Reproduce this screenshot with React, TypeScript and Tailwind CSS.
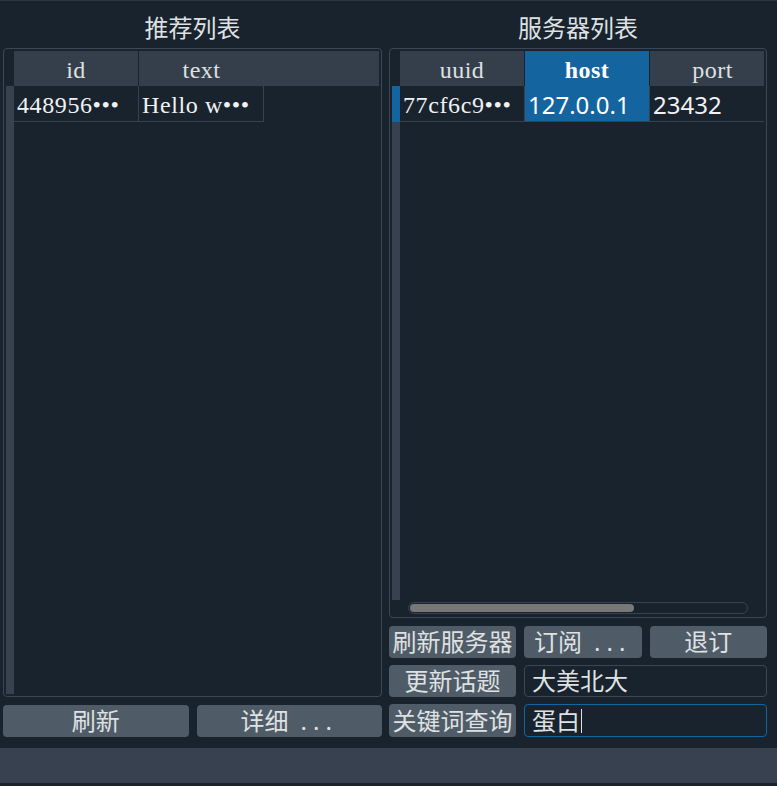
const serif = "font-['Liberation_Serif','Noto_Sans_CJK_SC',serif]";
const sans = "font-['Noto_Sans','Noto_Sans_CJK_SC',sans-serif]";

function Btn({ label, dots }: { label: string; dots?: boolean }) {
  return (
    <button className={`h-full rounded-[4px] bg-[#4f5c67] text-[#dfe1e2] text-[24px] leading-none ${sans}`}>
      {label}
      {dots && <span className="ml-[12px] tracking-[6px]">...</span>}
    </button>
  );
}

function HeaderCell({ label, active, last }: { label: string; active?: boolean; last?: boolean }) {
  return (
    <div
      className={`w-[125px] shrink-0 h-full flex items-center justify-center pt-[2px] text-[24px] leading-none tracking-[0.5px] ${serif} ${
        last ? "" : "border-r border-[#19232d]"
      } ${active ? "bg-[#1464a0] text-white font-bold" : "text-[#dfe1e2]"}`}
    >
      {label}
    </div>
  );
}

function Cell({ value, active, font }: { value: string; active?: boolean; font: string }) {
  return (
    <div
      className={`w-[125px] shrink-0 h-full border-r border-[#37414f] flex items-center pl-[3px] pt-[3px] text-[24px] leading-none whitespace-nowrap overflow-hidden ${font} ${
        active ? "bg-[#1464a0] text-white" : "text-[#f0f1f2]"
      }`}
    >
      {value}
    </div>
  );
}

function LeftTable() {
  return (
    <div className="flex-1 min-h-0 border border-[#3b4754] rounded-[4px] p-[2px] flex">
      <div className="w-[8px] flex flex-col">
        <div className="h-[35px]" />
        <div className="flex-1 bg-[#37414f]" />
      </div>
      <div className="flex-1 flex flex-col overflow-hidden">
        <div className="h-[35px] bg-[#343f4b] flex">
          <HeaderCell label="id" />
          <HeaderCell label="text" last />
        </div>
        <div className="h-[36px] flex">
          <div className="flex border-b border-[#37414f] tracking-[0.6px]">
            <Cell value="448956•••" font={serif} />
            <Cell value="Hello w•••" font={serif} />
          </div>
        </div>
      </div>
    </div>
  );
}

function RightTable() {
  return (
    <div className="flex-1 min-h-0 border border-[#3b4754] rounded-[4px] p-[2px] flex flex-col">
      <div className="flex-1 flex min-h-0">
        <div className="w-[8px] flex flex-col">
          <div className="h-[35px]" />
          <div className="h-[36px] bg-[#1464a0]" />
          <div className="flex-1 bg-[#37414f]" />
        </div>
        <div className="flex-1 flex flex-col overflow-hidden">
          <div className="h-[35px] bg-[#343f4b] flex">
            <HeaderCell label="uuid" />
            <HeaderCell label="host" active />
            <HeaderCell label="port" last />
          </div>
          <div className="h-[36px] flex border-b border-[#37414f]">
            <div className="flex tracking-[0.6px]">
              <Cell value="77cf6c9•••" font={serif} />
            </div>
            <Cell value="127.0.0.1" font={sans} active />
            <Cell value="23432" font={sans} />
          </div>
        </div>
      </div>
      <div className="h-[15px] pt-[2px] pl-[16px] pr-[16px]">
        <div className="h-[12px] border border-[#37414f] rounded-full p-[1px]">
          <div className="h-full w-[224px] bg-[#787878] rounded-full" />
        </div>
      </div>
    </div>
  );
}

function Title({ text }: { text: string }) {
  return (
    <div className={`h-[47px] flex items-center justify-center pt-[6px] text-[24px] leading-none text-[#dfe1e2] ${sans}`}>
      {text}
    </div>
  );
}

export default function App() {
  return (
    <div className="w-[777px] h-[786px] bg-[#19232d] flex flex-col border-t border-[#2a3541]">
      <div className="flex-1 flex gap-[7px] pl-[3px] pr-[10px] pb-[11px] min-h-0">
        <div className="w-[379px] flex flex-col">
          <Title text="推荐列表" />
          <LeftTable />
          <div className="mt-[8px] h-[32px] grid grid-cols-2 gap-[8px]">
            <Btn label="刷新" />
            <Btn label="详细" dots />
          </div>
        </div>
        <div className="w-[378px] flex flex-col">
          <Title text="服务器列表" />
          <RightTable />
          <div className="mt-[8px] grid grid-cols-[127px_1fr_1fr] gap-x-[8px] gap-y-[7px] grid-rows-[32px_32px_33px]">
            <Btn label="刷新服务器" />
            <Btn label="订阅" dots />
            <Btn label="退订" />
            <Btn label="更新话题" />
            <div className={`col-span-2 border border-[#3b4754] rounded-[4px] flex items-center pl-[7px] text-[24px] leading-none text-[#dfe1e2] ${sans}`}>
              大美北大
            </div>
            <Btn label="关键词查询" />
            <div className={`col-span-2 border border-[#1464a0] rounded-[4px] flex items-center pl-[7px] text-[24px] leading-none text-[#dfe1e2] ${sans}`}>
              蛋白
              <span className="w-px h-[24px] bg-[#dfe1e2] ml-[1px]" />
            </div>
          </div>
        </div>
      </div>
      <div className="h-[35px] bg-[#37414f]" />
      <div className="h-[3px] bg-[#19232d]" />
    </div>
  );
}
